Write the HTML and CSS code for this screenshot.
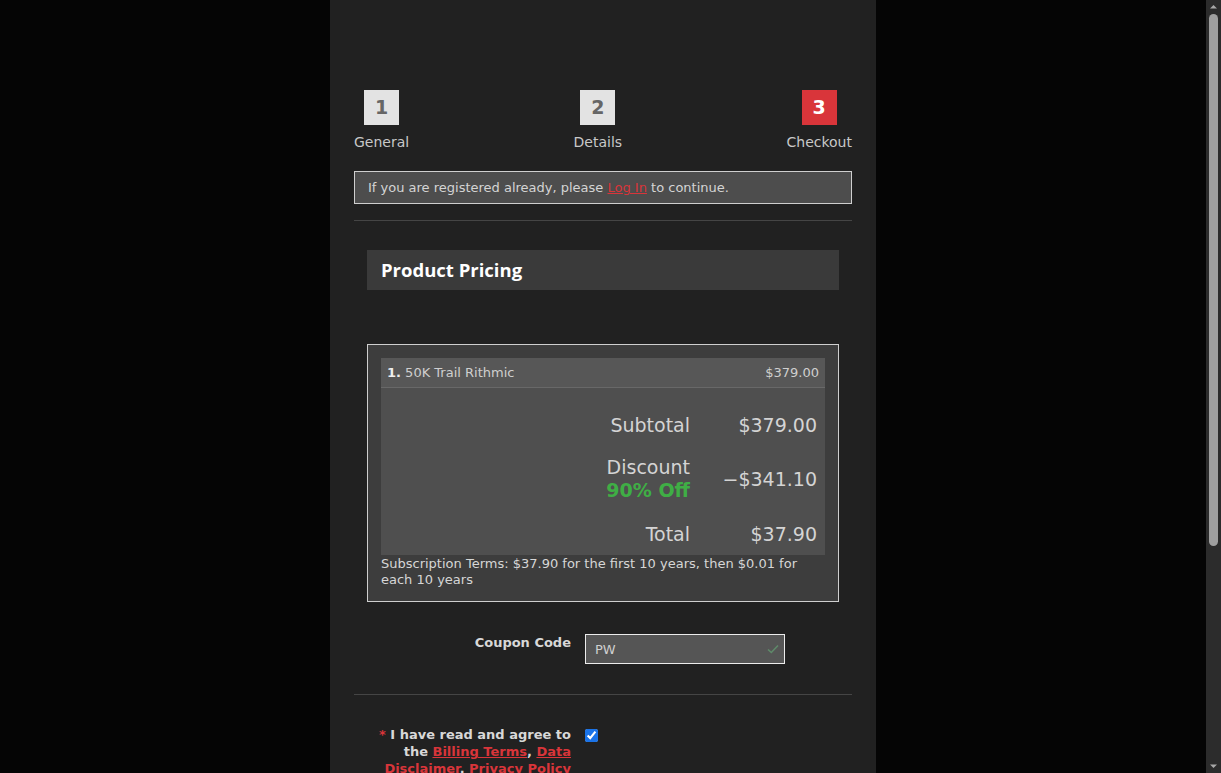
FILE: index.html
```html
<!DOCTYPE html>
<html lang="en">
<head>
  <meta charset="UTF-8">
  <meta name="viewport" content="width=device-width, initial-scale=1.0">
  <title>Checkout</title>
  <link rel="stylesheet" href="styles.css">
</head>
<body>
  <div class="viewport">
    <div class="page">
      <!-- Step indicator -->
      <div class="steps">
        <div class="step">
          <div class="step-num">1</div>
          <div class="step-label">General</div>
        </div>
        <div class="step">
          <div class="step-num">2</div>
          <div class="step-label">Details</div>
        </div>
        <div class="step active">
          <div class="step-num">3</div>
          <div class="step-label">Checkout</div>
        </div>
      </div>

      <div class="notice">
        If you are registered already, please <a href="#">Log In</a> to continue.
      </div>

      <hr class="divider">

      <div class="section">
        <h2 class="section-title">Product Pricing</h2>

        <div class="pricing">
          <div class="item-row">
            <span><b>1.</b> 50K Trail Rithmic</span>
            <span>$379.00</span>
          </div>
          <div class="totals">
            <div class="total-row subtotal">
              <div class="total-label">Subtotal</div>
              <div class="total-value">$379.00</div>
            </div>
            <div class="total-row discount">
              <div class="total-label">Discount<br><span class="off">90% Off</span></div>
              <div class="total-value">&minus;$341.10</div>
            </div>
            <div class="total-row grand">
              <div class="total-label">Total</div>
              <div class="total-value">$37.90</div>
            </div>
          </div>
          <div class="terms">Subscription Terms: $37.90 for the first 10 years, then $0.01 for each 10 years</div>
        </div>
      </div>

      <div class="field coupon-field">
        <label class="field-label" for="coupon">Coupon Code</label>
        <div class="coupon">
          <input id="coupon" type="text" value="PW">
          <svg class="coupon-ok" width="12" height="10" viewBox="0 0 12 10">
            <path d="M1 5.5 L4.3 8.5 L11 1.5" fill="none" stroke="#5f8a6a" stroke-width="1.6"/>
          </svg>
        </div>
      </div>

      <hr class="divider">

      <div class="field agree">
        <label class="field-label" for="agree">
          <span class="req">*</span> I have read and agree to the <a href="#">Billing Terms</a>, <a href="#">Data Disclaimer</a>, <a href="#">Privacy Policy</a> and <a href="#">Refund Policy</a>
        </label>
        <input id="agree" type="checkbox" checked>
      </div>

      <div class="actions">
        <button class="btn">Complete Order</button>
      </div>
    </div>
  </div>

  <!-- window scrollbar -->
  <div class="scrollbar">
    <svg class="scroll-arrow" width="15" height="14" viewBox="0 0 15 14">
      <path d="M4 8.5 L7.5 5 L11 8.5 Z" fill="#a8a8a8"/>
    </svg>
    <div class="scroll-track">
      <div class="scroll-thumb"></div>
    </div>
    <svg class="scroll-arrow" width="15" height="14" viewBox="0 0 15 14">
      <path d="M4 5.5 L7.5 9 L11 5.5 Z" fill="#a8a8a8"/>
    </svg>
  </div>
</body>
</html>
```

FILE: styles.css
```css
body {
  margin: 0;
  height: 100vh;
  overflow: hidden;
  display: flex;
  background-color: #050505;
  color: #ccc;
  font-family: "DejaVu Sans", sans-serif;
}
.viewport {
  flex: 1;
  overflow: hidden;
}
.scrollbar {
  width: 15px;
  display: flex;
  flex-direction: column;
  background-color: #2c2c2c;
}
.scroll-arrow {
  display: block;
  flex: none;
}
.scroll-track {
  flex: 1;
  padding: 0 3px;
}
.scroll-thumb {
  height: 532px;
  border-radius: 5px;
  background-color: #9f9f9f;
}
.page {
  box-sizing: border-box;
  width: 546px;
  min-height: 1082px;
  margin: 0 auto;
  padding: 90px 24px 120px;
  background-color: #212121;
}
.steps {
  display: flex;
  justify-content: space-between;
}
.step {
  display: flex;
  flex-direction: column;
  align-items: center;
}
.step-num {
  width: 35px;
  height: 35px;
  line-height: 35px;
  text-align: center;
  background-color: #e3e3e3;
  color: #666;
  font-weight: bold;
  font-size: 19px;
}
.step.active .step-num {
  background-color: #d9353a;
  color: #fff;
}
.step-label {
  margin-top: 9px;
  font-size: 14px;
  color: #c8c8c8;
}
.notice {
  margin-top: 21px;
  border: 1px solid #cfcfcf;
  background-color: #4d4d4d;
  padding: 8px 13px;
  font-size: 13px;
  line-height: 15px;
  color: #d4d4d4;
}
.notice a {
  color: #d9353a;
}
.divider {
  border: none;
  border-top: 1px solid #454545;
  margin: 16px 0 0;
}
.section {
  padding: 29px 13px 0;
}
.section-title {
  margin: 0;
  background-color: #3a3a3a;
  height: 40px;
  line-height: 40px;
  padding: 0 14px;
  font-family: "Open Sans", sans-serif;
  font-size: 18.5px;
  font-weight: bold;
  color: #fff;
}
.pricing {
  margin-top: 54px;
  border: 1px solid #cfcfcf;
  background-color: #3d3d3d;
  padding: 13px 13px 13px;
}
.item-row {
  display: flex;
  justify-content: space-between;
  background-color: #575757;
  border-bottom: 1px solid #686868;
  height: 29px;
  line-height: 29px;
  padding: 0 6px;
  font-size: 13px;
  color: #cfcfcf;
}
.item-row b {
  color: #eee;
}
.totals {
  background-color: #4f4f4f;
  padding: 14px 8px 0;
  font-size: 19px;
}
.total-row {
  display: grid;
  grid-template-columns: 1fr 127px;
  align-items: center;
  color: #d4d4d4;
}
.total-label {
  text-align: right;
}
.total-value {
  text-align: right;
}
.subtotal {
  padding: 10px 0;
  line-height: 26px;
}
.discount {
  padding: 8px 0;
  line-height: 23px;
}
.grand {
  padding: 11px 0 8px;
  line-height: 26px;
}
.off {
  color: #3fae45;
  font-weight: bold;
}
.terms {
  margin-top: 1px;
  font-size: 13px;
  line-height: 16px;
  color: #d6d6d6;
}
.field {
  display: grid;
  grid-template-columns: 217px 1fr;
  column-gap: 14px;
}
.coupon-field {
  margin-top: 32px;
}
.field-label {
  text-align: right;
  font-weight: bold;
  font-size: 13px;
  color: #d8d8d8;
  padding-top: 1px;
}
.coupon {
  position: relative;
  width: 200px;
}
.coupon input {
  box-sizing: border-box;
  width: 200px;
  height: 30px;
  border: 1px solid #ececec;
  background-color: #555;
  color: #cfcfcf;
  padding: 0 9px;
  font-family: "DejaVu Sans", sans-serif;
  font-size: 13px;
  outline: none;
}
.coupon-ok {
  position: absolute;
  right: 6px;
  top: 10px;
}
.coupon-field + .divider {
  margin-top: 30px;
}
.agree {
  margin-top: 31px;
}
.agree .field-label {
  line-height: 17px;
  padding: 0 0 0 20px;
}
.agree input {
  margin: 3px 0 0;
  width: 13px;
  height: 13px;
  accent-color: #1a73e8;
}
.req {
  color: #d9353a;
}
.field-label a {
  color: #d9353a;
}
.actions {
  margin-top: 40px;
  text-align: center;
}
.btn {
  background-color: #d9353a;
  color: #fff;
  border: none;
  padding: 12px 28px;
  font-family: "DejaVu Sans", sans-serif;
  font-size: 15px;
  font-weight: bold;
  cursor: pointer;
}
```
